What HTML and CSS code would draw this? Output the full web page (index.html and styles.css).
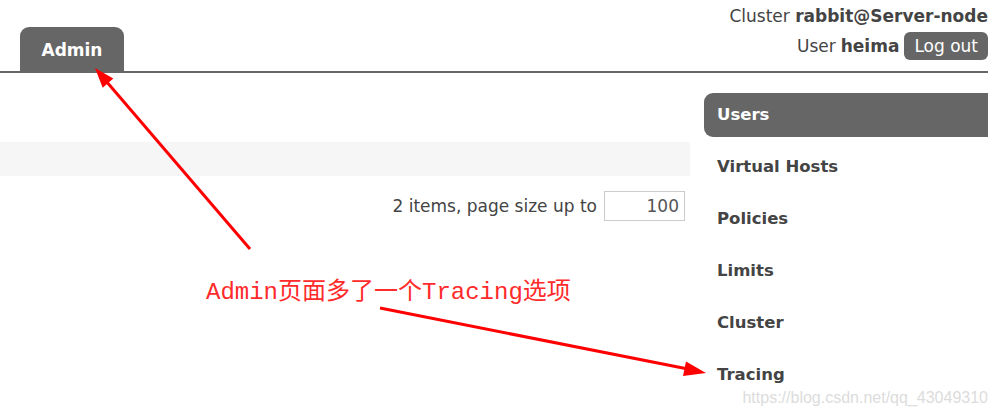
FILE: index.html
```html
<!DOCTYPE html>
<html lang="en">
<head>
    <meta charset="UTF-8">
    <meta name="viewport" content="width=device-width, initial-scale=1.0">
    <title>RabbitMQ Management: Admin</title>
    <link rel="stylesheet" href="styles.css">
</head>
<body>
    <div class="page">
        <!-- header with tabs and login status -->
        <div class="header">
            <ul class="tabs">
                <li class="tab active">Admin</li>
            </ul>
            <div class="status">
                <p>Cluster <b>rabbit@Server-node</b></p>
                <p class="user-line">User <b>heima</b> <span class="logout">Log out</span></p>
            </div>
        </div>

        <div class="content">
            <div class="main">
                <div class="band"></div>
                <div class="paging">
                    <span>2 items, page size up to</span>
                    <input type="text" class="page-size" value="100">
                </div>
            </div>
            <!-- admin sub menu -->
            <ul class="side-nav">
                <li class="selected">Users</li>
                <li>Virtual Hosts</li>
                <li>Policies</li>
                <li>Limits</li>
                <li>Cluster</li>
                <li>Tracing</li>
            </ul>
        </div>
    </div>

    <!-- annotation drawn over the screenshot -->
    <p class="note">Admin页面多了一个Tracing选项</p>
    <svg class="arrows" width="999" height="418" viewBox="0 0 999 418">
        <line x1="250" y1="249" x2="106" y2="81" stroke="#ff0000" stroke-width="3"/>
        <polygon points="95,68 113.3,78.6 102.7,87.8" fill="#ff0000"/>
        <line x1="380" y1="308" x2="688" y2="369" stroke="#ff0000" stroke-width="3"/>
        <polygon points="706,373 683,376 686,361.5" fill="#ff0000"/>
    </svg>
    <p class="watermark">https://blog.csdn.net/qq_43049310</p>
</body>
</html>
```
FILE: styles.css
```css
* {
    margin: 0;
    padding: 0;
    box-sizing: border-box;
}
body {
    font-family: "DejaVu Sans", Verdana, sans-serif;
    font-size: 17px;
    color: #444;
    background: #fff;
    width: 999px;
    height: 418px;
    overflow: hidden;
    position: relative;
}
.page {
    width: 988px;
}
.header {
    display: flex;
    justify-content: space-between;
    height: 73px;
    border-bottom: 2px solid #666;
}
.tabs {
    list-style: none;
    display: flex;
    align-self: flex-end;
    margin-left: 20px;
}
.tab {
    width: 104px;
    height: 44px;
    padding-top: 3px;
    line-height: 41px;
    text-align: center;
    font-weight: bold;
    color: #fff;
    background-color: #666;
    border-top-left-radius: 9px;
    border-top-right-radius: 9px;
}
.status {
    padding-top: 5px;
    text-align: right;
}
.status p {
    line-height: 22px;
}
.status .user-line {
    margin-top: 5px;
    display: flex;
    justify-content: flex-end;
    align-items: center;
    gap: 5px;
    line-height: 28px;
}
.logout {
    display: inline-block;
    padding: 0 10px;
    height: 28px;
    line-height: 28px;
    color: #fff;
    background-color: #666;
    border-radius: 6px;
}
.content {
    display: flex;
    gap: 14px;
}
.main {
    width: 690px;
    padding-top: 69px;
}
.band {
    height: 34px;
    background-color: #f6f6f6;
}
.paging {
    display: flex;
    justify-content: flex-end;
    align-items: center;
    gap: 7px;
    margin-top: 15px;
    padding-right: 5px;
}
.page-size {
    width: 81px;
    height: 30px;
    border: 1px solid #ccc;
    padding-right: 5px;
    text-align: right;
    font-family: "DejaVu Sans", Verdana, sans-serif;
    font-size: 17px;
    color: #555;
}
.side-nav {
    list-style: none;
    flex: 1;
    margin-top: 20px;
}
.side-nav li {
    height: 44px;
    line-height: 44px;
    margin-bottom: 8px;
    padding-left: 13px;
    font-weight: bold;
    font-size: 16.5px;
}
.side-nav li.selected {
    color: #fff;
    background-color: #666;
    border-top-left-radius: 9px;
    border-bottom-left-radius: 9px;
}
.note {
    position: absolute;
    left: 206px;
    top: 278px;
    font-family: "Liberation Mono", "Noto Sans CJK SC", monospace;
    font-size: 24px;
    line-height: 30px;
    color: #ff2a2a;
}
.arrows {
    position: absolute;
    left: 0;
    top: 0;
    pointer-events: none;
}
.watermark {
    position: absolute;
    right: 11px;
    top: 388px;
    font-family: "Liberation Sans", Arial, sans-serif;
    font-size: 16px;
    line-height: 20px;
    color: #dcdcdc;
}
```
